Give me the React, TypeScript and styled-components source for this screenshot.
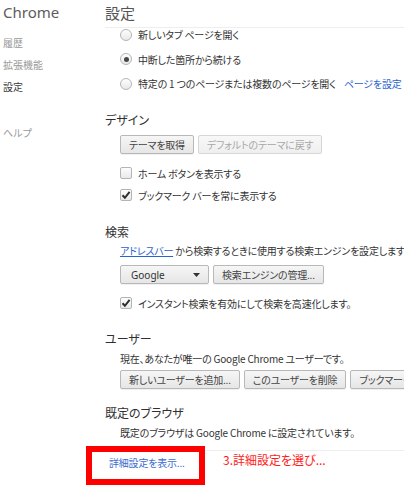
import React from 'react';
import styled, { createGlobalStyle } from 'styled-components';

const GlobalStyle = createGlobalStyle`
  html, body {
    margin: 0;
    padding: 0;
    background: #fff;
  }
  body {
    width: 404px;
    height: 500px;
    overflow: hidden;
    font-family: "Noto Sans CJK JP", "Noto Sans", sans-serif;
    font-size: 10px;
    color: #303030;
    font-feature-settings: "palt";
  }
`;

const Page = styled.div`
  position: relative;
  display: flex;
  width: 404px;
  height: 500px;
  overflow: hidden;
`;

const Nav = styled.nav`
  flex: none;
  width: 105px;
  padding-left: 3px;
  box-sizing: border-box;
`;

const NavTitle = styled.div`
  font-family: "Noto Sans", sans-serif;
  font-size: 15px;
  color: #5c5c5c;
  height: 27px;
  line-height: 25px;
`;

const NavItem = styled.div<{ $active?: boolean; $gap?: number }>`
  height: 22px;
  line-height: 22px;
  margin-top: ${p => p.$gap ?? 0}px;
  color: ${p => (p.$active ? '#3a3a3a' : '#9a9a9a')};
`;

const Main = styled.main`
  flex: 1;
  min-width: 0;
  overflow: hidden;
  white-space: nowrap;
  letter-spacing: -0.2px;
`;

const Header = styled.header`
  height: 27px;
  line-height: 26px;
  font-size: 15px;
  letter-spacing: 0;
  color: #555;
  border-bottom: 1px solid #eee;
`;

const Indent = styled.div<{ $top?: number }>`
  display: flex;
  flex-direction: column;
  padding-left: 15px;
  margin-top: ${p => p.$top ?? 0}px;
`;

const RadioList = styled(Indent)`
  gap: 11.5px;
`;

const Section = styled.section<{ $top: number }>`
  margin-top: ${p => p.$top}px;
`;

const SectionTitle = styled.h3`
  margin: 0;
  font-size: 12px;
  font-weight: normal;
  letter-spacing: 0;
  line-height: 16px;
  color: #303030;
`;

const OptionRow = styled.label<{ $top?: number }>`
  display: flex;
  align-items: center;
  gap: 6px;
  height: 13px;
  margin-top: ${p => p.$top ?? 0}px;
  color: #333;
`;

const RadioMark = styled.span<{ $checked?: boolean }>`
  position: relative;
  flex: none;
  width: 12px;
  height: 12px;
  box-sizing: border-box;
  border-radius: 50%;
  border: 1px solid #b4b4b4;
  background: linear-gradient(#fdfdfd, #e9e9e9);
  box-shadow: inset 0 1px 1px rgba(255, 255, 255, 0.8);
  &::after {
    content: '';
    display: ${p => (p.$checked ? 'block' : 'none')};
    position: absolute;
    left: 2.5px;
    top: 2.5px;
    width: 5px;
    height: 5px;
    border-radius: 50%;
    background: #474747;
  }
`;

const CheckMark = styled.span`
  flex: none;
  width: 12px;
  height: 12px;
  box-sizing: border-box;
  border: 1px solid #b4b4b4;
  border-radius: 2px;
  background: linear-gradient(#fdfdfd, #e9e9e9);
  display: flex;
  align-items: center;
  justify-content: center;
`;

const TextLine = styled.div<{ $top?: number }>`
  height: 16px;
  line-height: 16px;
  margin-top: ${p => p.$top ?? 0}px;
  color: #333;
`;

const Link = styled.a<{ $underline?: boolean }>`
  color: #2a62cf;
  text-decoration: ${p => (p.$underline ? 'underline' : 'none')};
  cursor: pointer;
`;

const ButtonRow = styled.div<{ $top?: number }>`
  display: flex;
  gap: 4px;
  margin-top: ${p => p.$top ?? 0}px;
`;

const Button = styled.button`
  flex: none;
  height: 19px;
  padding: 0 8px;
  font: inherit;
  font-size: 10px;
  letter-spacing: -0.2px;
  color: #444;
  border: 1px solid #b8b8b8;
  border-radius: 2px;
  background: linear-gradient(#f6f6f6, #e6e6e6);
  box-shadow: 0 1px 0 rgba(0, 0, 0, 0.06);
  white-space: nowrap;
  &:disabled {
    color: #a8a8a8;
    border-color: #d6d6d6;
    background: linear-gradient(#f8f8f8, #efefef);
    box-shadow: none;
  }
`;

const Select = styled(Button)`
  width: 89px;
  display: flex;
  align-items: center;
  justify-content: space-between;
  padding: 0 8px 0 10px;
  font-family: "Noto Sans", sans-serif;
  letter-spacing: 0;
  color: #333;
`;

const Footer = styled.div`
  margin-top: 9px;
  border-top: 1px solid #eee;
  padding: 4px 0 0 4px;
  height: 16px;
  line-height: 16px;
`;

const FooterLink = styled(Link)`
  color: #3a6ccf;
`;

const Highlight = styled.div`
  position: absolute;
  left: 86px;
  top: 446px;
  width: 119px;
  height: 39px;
  box-sizing: border-box;
  border: 6px solid #ff0000;
`;

const Note = styled.div`
  position: absolute;
  left: 223px;
  top: 452px;
  font-size: 12px;
  line-height: 16px;
  color: #ff1a1a;
`;

const Tick = () => (
  <svg width="10" height="10" viewBox="0 0 10 10">
    <path d="M1.5 5.2 L3.9 7.8 L8.6 1.8" fill="none" stroke="#2e2e2e" strokeWidth="2" />
  </svg>
);

const Caret = () => (
  <svg width="7" height="4" viewBox="0 0 7 4">
    <path d="M0 0 H7 L3.5 4 Z" fill="#333" />
  </svg>
);

const Check: React.FC<{ checked?: boolean }> = ({ checked }) => (
  <CheckMark>{checked && <Tick />}</CheckMark>
);

const App: React.FC = () => (
  <>
    <GlobalStyle />
    <Page>
      <Nav>
        <NavTitle>Chrome</NavTitle>
        <NavItem $gap={5}>履歴</NavItem>
        <NavItem>拡張機能</NavItem>
        <NavItem $active>設定</NavItem>
        <NavItem $gap={24}>ヘルプ</NavItem>
      </Nav>

      <Main>
        <Header>設定</Header>

        <RadioList>
          <OptionRow>
            <RadioMark />
            新しいタブ ページを開く
          </OptionRow>
          <OptionRow>
            <RadioMark $checked />
            中断した箇所から続ける
          </OptionRow>
          <OptionRow>
            <RadioMark />
            特定の 1 つのページまたは複数のページを開く&nbsp;<Link>ページを設定</Link>
          </OptionRow>
        </RadioList>

        <Section $top={22}>
          <SectionTitle>デザイン</SectionTitle>
          <Indent>
            <ButtonRow $top={7}>
              <Button>テーマを取得</Button>
              <Button disabled>デフォルトのテーマに戻す</Button>
            </ButtonRow>
            <OptionRow $top={12.5}>
              <Check />
              ホーム ボタンを表示する
            </OptionRow>
            <OptionRow $top={9}>
              <Check checked />
              ブックマーク バーを常に表示する
            </OptionRow>
          </Indent>
        </Section>

        <Section $top={22.5}>
          <SectionTitle>検索</SectionTitle>
          <Indent>
            <TextLine $top={3}>
              <Link $underline>アドレスバー</Link> から検索するときに使用する検索エンジンを設定します。
            </TextLine>
            <ButtonRow $top={6}>
              <Select>
                Google
                <Caret />
              </Select>
              <Button>検索エンジンの管理...</Button>
            </ButtonRow>
            <OptionRow $top={12.5}>
              <Check checked />
              インスタント検索を有効にして検索を高速化します。
            </OptionRow>
          </Indent>
        </Section>

        <Section $top={21.5}>
          <SectionTitle>ユーザー</SectionTitle>
          <Indent>
            <TextLine $top={4}>現在、あなたが唯一の Google Chrome ユーザーです。</TextLine>
            <ButtonRow $top={3}>
              <Button>新しいユーザーを追加...</Button>
              <Button>このユーザーを削除</Button>
              <Button>ブックマークと設定をインポート...</Button>
            </ButtonRow>
          </Indent>
        </Section>

        <Section $top={16}>
          <SectionTitle>既定のブラウザ</SectionTitle>
          <Indent>
            <TextLine $top={4}>既定のブラウザは Google Chrome に設定されています。</TextLine>
          </Indent>
        </Section>

        <Footer>
          <FooterLink>詳細設定を表示...</FooterLink>
        </Footer>
      </Main>

      <Highlight />
      <Note>3.詳細設定を選び...</Note>
    </Page>
  </>
);

export default App;
